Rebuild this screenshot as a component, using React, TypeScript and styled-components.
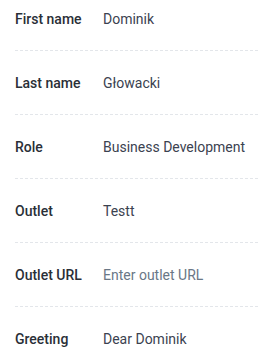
import React from 'react'
import styled, { createGlobalStyle } from 'styled-components'

const GlobalStyle = createGlobalStyle`
  html, body {
    margin: 0;
    padding: 0;
    background: #ffffff;
    font-family: Roboto, "Liberation Sans", Arial, sans-serif;
  }
`

const List = styled.dl`
  margin: -13px 0 0 15px;
  padding: 0;
`

const Row = styled.div<{ $last?: boolean }>`
  display: grid;
  grid-template-columns: 88px 1fr;
  align-items: center;
  padding: 22px 0 21px;
  border-bottom: ${(p) => (p.$last ? 'none' : '1px dashed #e3e6ea')};
`

const Label = styled.dt`
  margin: 0;
  font-size: 14px;
  line-height: 20px;
  font-weight: 500;
  color: #2a2f37;
`

const Value = styled.dd<{ $placeholder?: boolean }>`
  margin: 0;
  font-size: 14px;
  line-height: 20px;
  font-weight: 400;
  color: ${(p) => (p.$placeholder ? '#6a7786' : '#3b4250')};
`

interface Field {
  label: string
  value: string
  placeholder?: boolean
}

const fields: Field[] = [
  { label: 'First name', value: 'Dominik' },
  { label: 'Last name', value: 'Głowacki' },
  { label: 'Role', value: 'Business Development' },
  { label: 'Outlet', value: 'Testt' },
  { label: 'Outlet URL', value: 'Enter outlet URL', placeholder: true },
  { label: 'Greeting', value: 'Dear Dominik' },
]

const App = () => {
  return <>
    <GlobalStyle />
    <List>
      {fields.map((f, i) => (
        <Row key={f.label} $last={i === fields.length - 1}>
          <Label>{f.label}</Label>
          <Value $placeholder={f.placeholder}>{f.value}</Value>
        </Row>
      ))}
    </List>
  </>
}

export default App
